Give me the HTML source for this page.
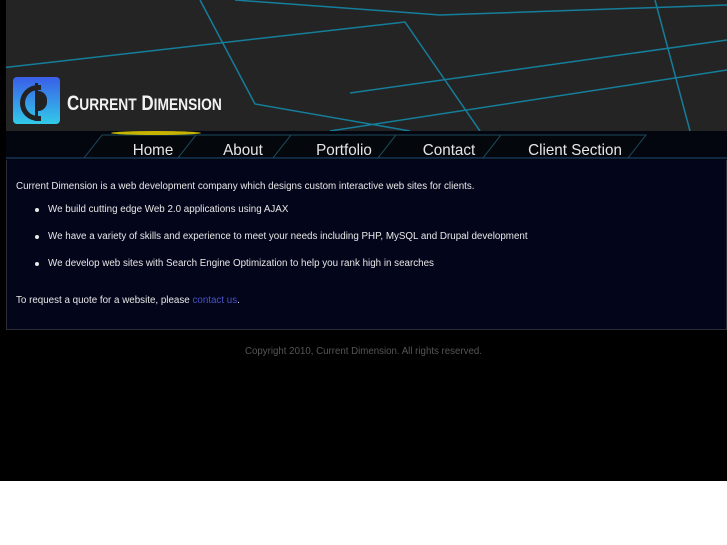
<!DOCTYPE html>
<html><head><meta charset="utf-8"><style>
body{margin:0;background:#fff;width:727px;height:545px;overflow:hidden;font-family:"Liberation Sans",sans-serif}
#wrap{position:absolute;left:0;top:0;width:727px;height:481px;background:#000}
#hdr{position:absolute;left:6px;top:0;width:721px;height:131px;background:#242424}
#nav{position:absolute;left:6px;top:131px;width:721px;height:30px;background:#03050f}
.t{position:absolute;top:142px;color:#e6e6e6;font-size:16px;transform:translateX(-50%) scaleX(0.95);white-space:nowrap}
#content{position:absolute;left:6px;top:160px;width:719px;height:169px;background:#03051a;border:1px solid #2c2c34;border-top:none;color:#e8e8e8;font-size:9.8px}
#content p{margin:0;position:absolute;left:9px;white-space:nowrap}
#content li{position:absolute;left:41px;white-space:nowrap}
#content li:before{content:"";position:absolute;left:-13px;top:4px;width:4px;height:4px;border-radius:50%;background:#e8e8e8}
a{color:#4a52c8;text-decoration:none}
#foot{position:absolute;top:346px;left:0;width:727px;text-align:center;color:#555;font-size:9.7px}
</style></head><body>
<div id="wrap">
<div id="hdr">
<svg width="721" height="131" style="position:absolute;left:0;top:0">
<g fill="none" stroke="#1295b8" stroke-width="1.5" opacity=".8">
<polyline points="-6,68 399,22 474,131"/>
<polyline points="194,0 249,104 404,131"/>
<polyline points="229,0 434,15 721,5"/>
<polyline points="344,93 721,40"/>
<polyline points="649,0 684,131"/>
<polyline points="324,131 721,70"/>
</g>
</svg>
<div style="position:absolute;left:7px;top:77px;width:47px;height:47px;border-radius:4px;background:linear-gradient(#3a5ee8,#32c9e8)"></div>
<div style="position:absolute;left:14px;top:85px;width:16px;height:26px;border:5px solid #222;border-right:none;border-radius:20px 0 0 20px"></div>
<div style="position:absolute;left:29px;top:83px;width:3px;height:38px;background:#222"></div>
<div style="position:absolute;left:32px;top:91px;width:9px;height:20px;border-radius:0 10px 10px 0;background:#222"></div>
<div style="position:absolute;left:61px;top:92px;color:#f2f2f2;font:bold 21px 'Liberation Sans',sans-serif;transform:scaleX(0.81);transform-origin:left;white-space:nowrap">C<span style="font-size:17px">URRENT</span> D<span style="font-size:17px">IMENSION</span></div>
</div>
<div id="nav">
<svg width="721" height="30" style="position:absolute;left:0;top:0">
<g fill="#04080d" stroke="#1d4a5a" stroke-width="1">
<polygon points="96,4 190,4 172,27 78,27"/>
<polygon points="190,4 285,4 267,27 172,27"/>
<polygon points="285,4 390,4 372,27 267,27"/>
<polygon points="390,4 495,4 477,27 372,27"/>
<polygon points="495,4 640,4 622,27 477,27"/>
</g>
<line x1="0" y1="27" x2="721" y2="27" stroke="#1f4b7a"/>
<ellipse cx="150" cy="2" rx="45" ry="2" fill="#c8b400"/>
</svg>
</div>
<div class="t" style="left:153px">Home</div>
<div class="t" style="left:243px">About</div>
<div class="t" style="left:344px">Portfolio</div>
<div class="t" style="left:449px">Contact</div>
<div class="t" style="left:575px">Client Section</div>
<div id="content">
<p style="top:21px">Current Dimension is a web development company which designs custom interactive web sites for clients.</p>
<ul style="margin:0;padding:0;list-style:none">
<li style="top:44px">We build cutting edge Web 2.0 applications using AJAX</li>
<li style="top:71px">We have a variety of skills and experience to meet your needs including PHP, MySQL and Drupal development</li>
<li style="top:98px">We develop web sites with Search Engine Optimization to help you rank high in searches</li>
</ul>
<p style="top:135px">To request a quote for a website, please <a>contact us</a>.</p>
</div>
<div id="foot">Copyright 2010, Current Dimension. All rights reserved.</div>
</div>
</body></html>
